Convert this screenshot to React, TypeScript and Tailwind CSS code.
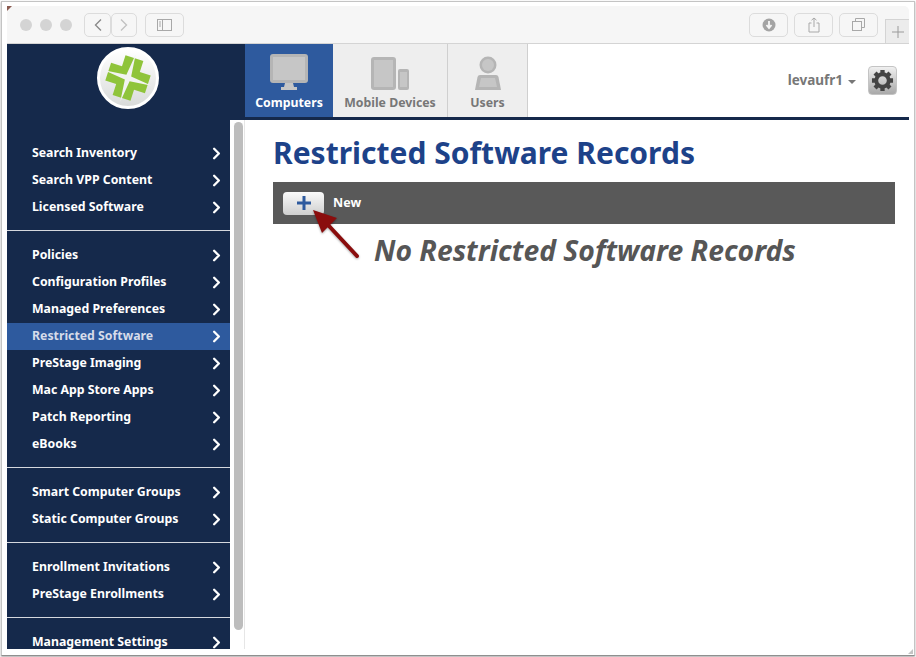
import { ChevronRight } from 'lucide-react';

const groups = [
  ['Search Inventory', 'Search VPP Content', 'Licensed Software'],
  ['Policies', 'Configuration Profiles', 'Managed Preferences', 'Restricted Software', 'PreStage Imaging', 'Mac App Store Apps', 'Patch Reporting', 'eBooks'],
  ['Smart Computer Groups', 'Static Computer Groups'],
  ['Enrollment Invitations', 'PreStage Enrollments'],
  ['Management Settings'],
];

const font = "font-['Noto_Sans','DejaVu_Sans',sans-serif]";

function Logo() {
  return (
    <div className="w-[62px] h-[62px] rounded-full bg-gradient-to-b from-white to-[#d9dbda] border-[3px] border-white flex items-center justify-center">
      <svg width="50" height="50" viewBox="0 0 48 48">
        <g transform="rotate(18 24 24)">
          <path d="M15 4 H33 V15 H44 V33 H33 V44 H15 V33 H4 V15 H15 Z" fill="#8fc43a" />
          <path d="M24 0 L26.4 21.6 L48 24 L26.4 26.4 L24 48 L21.6 26.4 L0 24 L21.6 21.6 Z" fill="#f2f3f2" />
        </g>
      </svg>
    </div>
  );
}

function ToolBtn({ className = '', children }: { className?: string; children?: React.ReactNode }) {
  return (
    <div className={`h-[24px] rounded-[5px] border border-[#dcdcdc] bg-[#f6f6f6] flex items-center justify-center ${className}`}>
      {children}
    </div>
  );
}

function Toolbar() {
  return (
    <div className="h-[38px] shrink-0 bg-[#f6f6f6] border-b border-[#d4d4d4] rounded-tr-[5px] flex items-center pl-[13px]">
      <div className="flex gap-[8px]">
        <div className="w-[12px] h-[12px] rounded-full bg-[#d4d4d4]" />
        <div className="w-[12px] h-[12px] rounded-full bg-[#d4d4d4]" />
        <div className="w-[12px] h-[12px] rounded-full bg-[#d4d4d4]" />
      </div>
      <div className="flex ml-[12px]">
        <ToolBtn className="w-[27px]">
          <svg width="10" height="14" viewBox="0 0 10 14"><path d="M8 1.5 L2.5 7 L8 12.5" fill="none" stroke="#8a8a8a" strokeWidth="1.4" /></svg>
        </ToolBtn>
        <ToolBtn className="w-[26px]">
          <svg width="10" height="14" viewBox="0 0 10 14"><path d="M2 1.5 L7.5 7 L2 12.5" fill="none" stroke="#c2c2c2" strokeWidth="1.4" /></svg>
        </ToolBtn>
      </div>
      <ToolBtn className="w-[39px] ml-[8px]">
        <svg width="15" height="12" viewBox="0 0 15 12">
          <rect x="0.5" y="0.5" width="14" height="11" fill="none" stroke="#a8a8a8" />
          <path d="M5.5 0.5 V11.5" stroke="#a8a8a8" />
          <path d="M2 3 H4 M2 5 H4 M2 7 H4" stroke="#a8a8a8" />
        </svg>
      </ToolBtn>
      <div className="ml-auto flex gap-[6px] items-center">
        <ToolBtn className="w-[39px]">
          <svg width="14" height="14" viewBox="0 0 14 14">
            <circle cx="7" cy="7" r="6.5" fill="#a4a4a4" />
            <path d="M7 3 V9 M4.5 7 L7 10 L9.5 7" fill="none" stroke="#f6f6f6" strokeWidth="1.8" />
          </svg>
        </ToolBtn>
        <ToolBtn className="w-[39px]">
          <svg width="12" height="16" viewBox="0 0 12 16">
            <path d="M3.5 6 H1 V15 H11 V6 H8.5 M6 10 V1 M3.5 3.2 L6 1 L8.5 3.2" fill="none" stroke="#a8a8a8" />
          </svg>
        </ToolBtn>
        <ToolBtn className="w-[39px]">
          <svg width="13" height="13" viewBox="0 0 13 13">
            <rect x="0.5" y="3.5" width="9" height="9" fill="none" stroke="#a8a8a8" />
            <path d="M3.5 3 V0.5 H12.5 V9.5 H10" fill="none" stroke="#a8a8a8" />
          </svg>
        </ToolBtn>
        <div className="ml-[1px] w-[24px] h-[24px] mt-[13px] bg-[#ececec] border border-b-0 border-r-0 border-[#d4d4d4] flex items-center justify-center">
          <svg width="12" height="12" viewBox="0 0 12 12"><path d="M6 0 V12 M0 6 H12" stroke="#9a9a9a" /></svg>
        </div>
      </div>
    </div>
  );
}

function Tabs() {
  return (
    <div className="flex h-[73px]">
      <div className="w-[88px] bg-[#2e5a9e] flex flex-col items-center pt-[10px]">
        <svg width="38" height="37" viewBox="0 0 38 37">
          <rect width="38" height="29" rx="3" fill="#b5b5b5" />
          <rect x="3" y="3" width="32" height="23" fill="#c6c6c6" />
          <path d="M15 29 H23 L24 33 H27 V36 H11 V33 H14 Z" fill="#c6c6c6" />
        </svg>
        <span className="text-[12.3px] font-bold text-white mt-[4px] leading-[16px]">Computers</span>
      </div>
      <div className="w-[115px] bg-[#eeeeee] border-r border-[#cfcfcf] flex flex-col items-center pt-[13px]">
        <svg width="38" height="34" viewBox="0 0 38 34">
          <rect width="25" height="33" rx="3" fill="#b5b5b5" />
          <rect x="3" y="3" width="19" height="27" fill="#c6c6c6" />
          <rect x="27" y="12" width="11" height="21" rx="2" fill="#b5b5b5" />
          <rect x="29" y="15" width="7" height="15" fill="#c6c6c6" />
        </svg>
        <span className="text-[12.3px] font-bold text-[#777777] mt-[4px] leading-[16px]">Mobile Devices</span>
      </div>
      <div className="w-[80px] bg-[#eeeeee] border-r border-[#cfcfcf] flex flex-col items-center pt-[12px]">
        <svg width="26" height="35" viewBox="0 0 26 35">
          <circle cx="13" cy="9" r="8.5" fill="#b5b5b5" />
          <circle cx="13" cy="9" r="6" fill="#c6c6c6" />
          <path d="M5 19 H21 Q23 19 23.5 21 L26 34 H0 L2.5 21 Q3 19 5 19 Z" fill="#b5b5b5" />
          <path d="M6 22 H20 L22 31 H4 Z" fill="#c6c6c6" />
        </svg>
        <span className="text-[12.3px] font-bold text-[#777777] mt-[4px] leading-[16px]">Users</span>
      </div>
    </div>
  );
}

function Sidebar() {
  return (
    <div className="w-[223px] shrink-0 bg-[#15294b] overflow-hidden">
      {groups.map((items, i) => (
        <div key={i} className={`pb-[9px] ${i === 0 ? 'pt-[20px]' : 'pt-[11px]'} ${i < groups.length - 1 ? 'border-b border-[#d5d8de]' : ''}`}>
          {items.map((label) => (
            <div
              key={label}
              className={`h-[27px] pl-[25px] pr-[4px] flex items-center justify-between text-[12.3px] font-bold ${label === 'Restricted Software' ? 'bg-[#2e5a9e] text-[#d6dcea]' : 'text-white'}`}
            >
              <span>{label}</span>
              <ChevronRight size={19} strokeWidth={3} color="white" />
            </div>
          ))}
        </div>
      ))}
    </div>
  );
}

export default function App() {
  return (
    <div className={`w-[916px] h-[657px] bg-white p-[1px] overflow-hidden ${font}`}>
      <div className="h-full border border-[#c4c4c4] border-b-[#8f8f8f] shadow-[0_1px_2px_rgba(0,0,0,0.35)] bg-white pt-[4px] pl-[5px] pr-[5px] pb-[6px] relative">
        <div className="relative h-full flex flex-col overflow-hidden">
          <Toolbar />
          <div className="flex h-[76px] shrink-0 border-b-[3px] border-[#15294b]">
            <div className="w-[238px] shrink-0 bg-[#15294b] pl-[90px] pt-[3px]">
              <Logo />
            </div>
            <Tabs />
            <div className="ml-auto flex items-center h-[73px] pr-[12px]">
              <span className="text-[13.5px] font-bold text-[#777777]">levaufr1</span>
              <span className="ml-[5px] mt-[2px] w-0 h-0 border-x-[4px] border-x-transparent border-t-[4px] border-t-[#777777]" />
              <div className="ml-[12px] w-[29px] h-[29px] rounded-[4px] border border-[#c4c4c4] bg-gradient-to-b from-[#f0f0f0] to-[#a9a9a9] flex items-center justify-center">
                <svg width="23" height="23" viewBox="0 0 24 24">
                  <circle cx="12" cy="12" r="6.5" fill="none" stroke="#444444" strokeWidth="4" />
                  <g stroke="#444444" strokeWidth="4.5">
                    <path d="M12 1 V5 M12 19 V23 M1 12 H5 M19 12 H23" />
                    <path d="M4.2 4.2 L7 7 M17 17 L19.8 19.8 M19.8 4.2 L17 7 M7 17 L4.2 19.8" />
                  </g>
                </svg>
              </div>
            </div>
          </div>
          <div className="flex flex-1 min-h-0">
            <Sidebar />
            <div className="w-[15px] shrink-0 bg-white border-r border-[#e6e6e6] pl-[4px] pt-[2px]">
              <div className="w-[9px] h-[508px] rounded-full bg-[#bdbdbd]" />
            </div>
            <main className="flex-1 pl-[28px] pr-[14px] pt-[13px]">
              <h1 className="text-[30px] leading-[40px] font-bold text-[#1d4289]">Restricted Software Records</h1>
              <div className="mt-[9px] h-[42px] bg-[#595959] flex items-center pl-[10px]">
                <div className="w-[41px] h-[23px] rounded-[4px] bg-gradient-to-b from-[#fafafa] to-[#cfcfcf] flex items-center justify-center">
                  <svg width="14" height="14" viewBox="0 0 14 14"><path d="M7 0 V14 M0 7 H14" stroke="#2e5a9e" strokeWidth="3" /></svg>
                </div>
                <span className="ml-[9px] mt-[1px] text-[12.5px] font-bold text-white">New</span>
              </div>
              <p className="ml-[101px] mt-[5px] text-[28.3px] leading-[42px] font-bold italic text-[#565656]">No Restricted Software Records</p>
            </main>
          </div>
          <svg className="absolute left-0 top-0" width="5" height="5" viewBox="0 0 5 5"><path d="M0 0 H5 L0 5 Z" fill="#8a5a50" /></svg>
          <svg className="absolute left-[300px] top-[199px] drop-shadow-[0_1px_1px_rgba(0,0,0,0.35)]" width="60" height="66" viewBox="0 0 60 66">
            <path d="M50 51 L22 21" stroke="#8a0d0d" strokeWidth="4" strokeLinecap="round" />
            <path d="M6 5 L30 13 L15 28 Z" fill="#8a0d0d" />
          </svg>
        </div>
        <svg className="absolute right-[1px] bottom-[1px]" width="5" height="5" viewBox="0 0 5 5"><path d="M5 0 V5 H0 Z" fill="#c4c4c4" /></svg>
      </div>
    </div>
  );
}
